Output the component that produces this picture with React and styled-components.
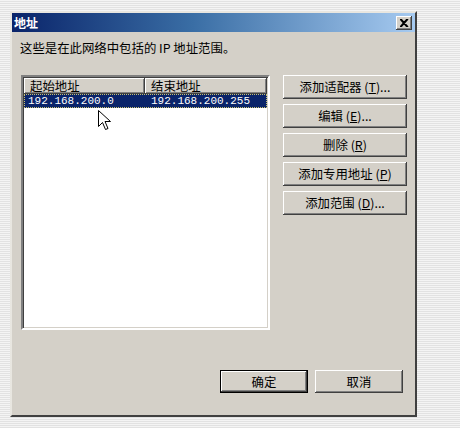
import React from "react";
import styled, { createGlobalStyle, css } from "styled-components";

const GlobalStyle = createGlobalStyle`
  html, body {
    margin: 0;
    padding: 0;
  }
  body {
    font-family: "Noto Sans CJK SC", "Liberation Sans", sans-serif;
    font-size: 12px;
    color: #000;
  }
`;

const face = "#d4d0c8";

const raised = css`
  box-shadow: inset -1px -1px #404040, inset 1px 1px #ffffff,
    inset -2px -2px #808080, inset 2px 2px ${face};
`;

const Page = styled.div`
  width: 460px;
  height: 428px;
  box-sizing: border-box;
  padding: 11px 0 0 10px;
  background: repeating-linear-gradient(
    to bottom,
    #f4f4f4 0px,
    #f4f4f4 1px,
    #e2e2e2 1px,
    #e2e2e2 2px
  );
  overflow: hidden;
`;

const Dialog = styled.div`
  width: 407px;
  height: 406px;
  box-sizing: border-box;
  background: ${face};
  border: 2px solid;
  border-color: #e8e6e0 #404040 #404040 #e8e6e0;
  display: flex;
  flex-direction: column;
`;

const TitleBar = styled.div`
  height: 19px;
  flex: none;
  display: flex;
  align-items: center;
  justify-content: space-between;
  padding: 0 3px 0 2px;
  background: linear-gradient(to right, #0a246a 0%, #3a6ea5 45%, #a6caf0 100%);
`;

const TitleText = styled.span`
  color: #fff;
  font-weight: bold;
  font-size: 12px;
  line-height: 19px;
`;

const CloseButton = styled.div`
  width: 16px;
  height: 14px;
  background: ${face};
  ${raised};
  display: flex;
  align-items: center;
  justify-content: center;
`;

const Body = styled.div`
  flex: 1;
  display: flex;
  flex-direction: column;
  padding: 0 8px 0 8px;
`;

const Intro = styled.div`
  margin-top: 8px;
  line-height: 16px;
  font-size: 12.4px;
`;

const Main = styled.div`
  margin-top: 19px;
  display: flex;
  gap: 13px;
`;

const ListView = styled.div`
  position: relative;
  margin-left: 1px;
  width: 249px;
  height: 255px;
  box-sizing: border-box;
  background: #fff;
  border: 2px solid;
  border-color: #808080 #ffffff #ffffff #808080;
  box-shadow: inset 1px 1px #404040, inset -1px -1px ${face};
  padding: 1px 1px 0 1px;
`;

const HeaderRow = styled.div`
  display: flex;
  height: 16px;
`;

const HeaderCell = styled.div`
  width: ${(p) => p.$width}px;
  box-sizing: border-box;
  background: ${face};
  ${raised};
  padding: 0 6px;
  line-height: 16px;
  font-size: 12.4px;
`;

const Row = styled.div`
  display: flex;
  height: 14px;
  background: ${(p) => (p.$selected ? "#0a246a" : "transparent")};
  color: ${(p) => (p.$selected ? "#fff" : "#000")};
  outline: ${(p) => (p.$selected ? "1px dotted #c8c070" : "none")};
  outline-offset: -1px;
`;

const Cell = styled.div`
  width: ${(p) => p.$width}px;
  box-sizing: border-box;
  padding: 0 4px;
  font-family: "Liberation Mono", "DejaVu Sans Mono", monospace;
  font-size: 11px;
  line-height: 14px;
  white-space: nowrap;
`;

const Cursor = styled.svg`
  position: absolute;
  left: 75px;
  top: 33px;
`;

const ButtonColumn = styled.div`
  display: flex;
  flex-direction: column;
  gap: 5px;
`;

const Button = styled.div`
  width: ${(p) => p.$width || 124}px;
  height: ${(p) => p.$height || 24}px;
  box-sizing: border-box;
  background: ${face};
  ${raised};
  display: flex;
  align-items: center;
  justify-content: center;
  font-size: 12.4px;
  white-space: nowrap;
  ${(p) =>
    p.$default &&
    css`
      box-shadow: inset 0 0 0 1px #000, inset -2px -2px #404040,
        inset 2px 2px #ffffff, inset -3px -3px #808080;
    `}
`;

const Key = styled.span`
  text-decoration: underline;
`;

const Footer = styled.div`
  margin-top: 40px;
  padding-right: 4px;
  display: flex;
  justify-content: flex-end;
  gap: 7px;
`;

const sideButtons = [
  { label: "添加适配器", key: "T", more: true },
  { label: "编辑", key: "E", more: true },
  { label: "删除", key: "R", more: false },
  { label: "添加专用地址", key: "P", more: false },
  { label: "添加范围", key: "D", more: true },
];

const rows = [{ start: "192.168.200.0", end: "192.168.200.255", selected: true }];

export default function App() {
  return (
    <Page>
      <GlobalStyle />
      <Dialog>
        <TitleBar>
          <TitleText>地址</TitleText>
          <CloseButton>
            <svg width="9" height="8" viewBox="0 0 9 8">
              <path d="M1 0 L8 8 M8 0 L1 8 M0 0 L7 8 M7 0 L0 8" stroke="#000" strokeWidth="1.3" />
            </svg>
          </CloseButton>
        </TitleBar>
        <Body>
          <Intro>这些是在此网络中包括的 IP 地址范围。</Intro>
          <Main>
            <ListView>
              <HeaderRow>
                <HeaderCell $width={122}>起始地址</HeaderCell>
                <HeaderCell $width={123}>结束地址</HeaderCell>
              </HeaderRow>
              {rows.map((r) => (
                <Row key={r.start} $selected={r.selected}>
                  <Cell $width={124}>{r.start}</Cell>
                  <Cell $width={121}>{r.end}</Cell>
                </Row>
              ))}
              <Cursor width="13" height="21" viewBox="0 0 13 21">
                <path
                  d="M0.5 0.5 L0.5 16.5 L4.5 12.5 L7.5 19.5 L10 18.5 L7 11.5 L12.5 11.5 Z"
                  fill="#fff"
                  stroke="#000"
                  strokeWidth="1"
                />
              </Cursor>
            </ListView>
            <ButtonColumn>
              {sideButtons.map((b) => (
                <Button key={b.key}>
                  {b.label} (<Key>{b.key}</Key>){b.more ? "..." : ""}
                </Button>
              ))}
            </ButtonColumn>
          </Main>
          <Footer>
            <Button $width={88} $height={23} $default>
              确定
            </Button>
            <Button $width={88} $height={23}>
              取消
            </Button>
          </Footer>
        </Body>
      </Dialog>
    </Page>
  );
}
